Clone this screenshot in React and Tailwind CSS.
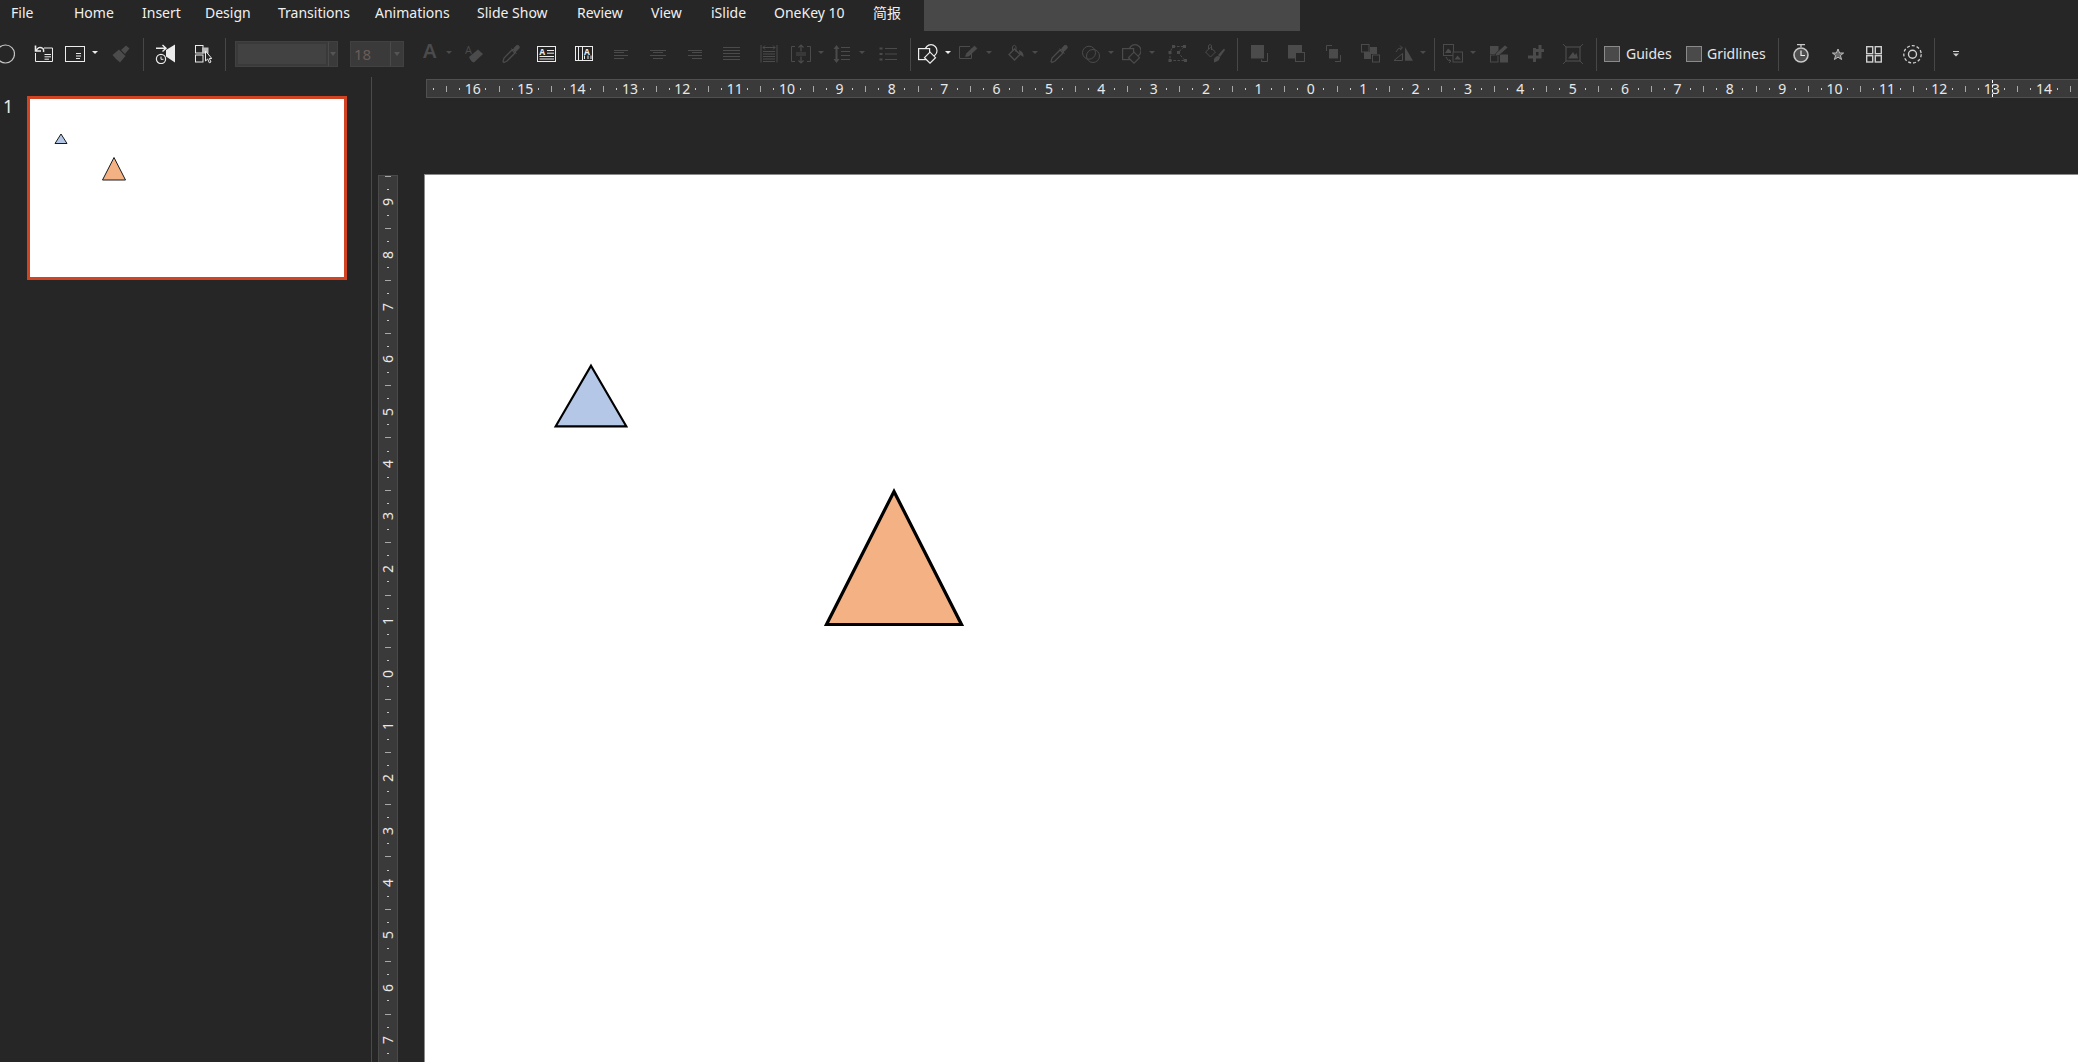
import React from "react";

const G = "#4b4b4b";
const W = "#ececec";
const BG = "#262626";

function Ic({ w, className = "", children }) {
  return (
    <svg width={w} height={20} viewBox={`0 0 ${w} 20`} fill="none" className={`shrink-0 ${className}`}>
      {children}
    </svg>
  );
}
const Caret = ({ className = "", color = G }) => (
  <Ic w={6} className={className}>
    <path d="M0 7H6L3 10Z" fill={color} />
  </Ic>
);
const Sep = ({ className = "" }) => <div className={`w-px h-[33px] shrink-0 bg-[#474747] ${className}`} />;
const Lines = ({ w, rows, className = "" }) => (
  <Ic w={w} className={className}>
    {rows.map((r, i) => (
      <path key={i} d={`M${r[0]} ${r[2] + 0.5}H${r[1]}`} stroke={G} />
    ))}
  </Ic>
);
const Dropper = ({ w, className = "" }) => (
  <Ic w={w} className={className}>
    <path d="M2 18.5L1 17.5L2 14L10 6L13 9L5 17Z" stroke={G} strokeWidth="1.3" />
    <path d="M9.5 4.5L11 6L13.5 2.5Q15.5 0.5 17 2Q18 4 16 5.5L13 8L14.5 9.5" fill={G} stroke={G} />
  </Ic>
);
const Shape = ({ w, color, className = "" }) => (
  <Ic w={w} className={className}>
    <circle cx="13" cy="6.7" r="6" stroke={color} strokeWidth="1.2" />
    <rect x="0.6" y="4.6" width="11" height="11" fill={BG} stroke={color} strokeWidth="1.2" />
    <path d="M12 8.2L17.5 13.7L12 19.2L6.5 13.7Z" fill={BG} stroke={color} strokeWidth="1.2" />
  </Ic>
);

const menus = [
  ["File", "ml-[11px] w-[22px]"],
  ["Home", "ml-[41px] w-[41px]"],
  ["Insert", "ml-[27px] w-[36px]"],
  ["Design", "ml-[27px] w-[46px]"],
  ["Transitions", "ml-[27px] w-[70px]"],
  ["Animations", "ml-[27px] w-[75px]"],
  ["Slide Show", "ml-[27px] w-[73px]"],
  ["Review", "ml-[27px] w-[47px]"],
  ["View", "ml-[27px] w-[32px]"],
  ["iSlide", "ml-[28px] w-[36px]"],
  ["OneKey 10", "ml-[27px] w-[71px]"],
  ["简报", "ml-[28px] w-[29px]"],
];

function Toolbar() {
  return (
    <div className="h-[46px] flex items-center shrink-0">
      <Ic w={18} className="-ml-[3px]">
        <circle cx="8.5" cy="10" r="9" stroke="#c4c4c4" strokeWidth="1.2" />
      </Ic>
      <Ic w={20} className="ml-[18px]">
        <path d="M11 4H19.5V17.5H2.5V9" stroke={W} />
        <path d="M2.5 1.5V7H8" stroke={W} strokeWidth="1.6" />
        <path d="M3 7Q5.5 1.5 10 4.5Q11 6 10.5 8" stroke={W} strokeWidth="1.5" />
        <path d="M11.5 10.5H18M11.5 12.8H18M11.5 15.2H16" stroke={W} />
      </Ic>
      <Ic w={20} className="ml-[12px]">
        <rect x="0.5" y="2.5" width="19" height="15" stroke={W} />
        <path d="M11 9.5H16M11 12H16M11 14.5H15" stroke={W} />
      </Ic>
      <Caret className="ml-[7px]" color={W} />
      <Ic w={18} className="ml-[14px]">
        <path d="M0.5 11L7 5.5L13.5 12L8 18.5Q4 15.5 0.5 11Z" fill={G} />
        <path d="M9 6L14 1.5L17.5 4.5L13 10Z" fill={G} />
      </Ic>
      <Sep className="ml-[13px]" />
      <Ic w={21} className="ml-[11px]">
        <path d="M11 6L20 0.5V18.5L11 12.5Z" fill={W} />
        <path d="M1 4.3H11M7.5 1L11 4.3L7.5 7.6" stroke={W} strokeWidth="1.4" />
        <circle cx="6" cy="15" r="4.6" fill={BG} stroke={W} strokeWidth="1.2" />
        <path d="M6 12.5V15.3H8.5" stroke={W} />
      </Ic>
      <Ic w={17} className="ml-[19px]">
        <rect x="0.5" y="1.5" width="7.5" height="7.5" stroke={W} />
        <rect x="7" y="3.5" width="6.5" height="6" fill="#bdbdbd" />
        <rect x="0.5" y="11" width="7.5" height="7" stroke={W} />
        <path d="M10.5 7V17L12.7 15L14.3 18.8L16 18L14.3 14.5H16.8Z" fill={BG} stroke={W} />
      </Ic>
      <Sep className="ml-[13px]" />
      <div className="ml-[9px] w-[103px] h-[26px] shrink-0 flex bg-[#3a3a3a] border border-[#414141]">
        <div className="w-[88px] m-[2px] bg-[#424242]" />
        <div className="flex-1 border-l border-[#4a4a4a] flex items-center justify-center">
          <div className="border-x-[3px] border-x-transparent border-t-[4px] border-t-[#555555]" />
        </div>
      </div>
      <div className="ml-[12px] w-[54px] h-[26px] shrink-0 flex bg-[#3a3a3a] border border-[#414141]">
        <div className="w-[39px] flex items-center text-[15px] leading-[20px] pl-[3px] text-[#6a5c58]">18</div>
        <div className="flex-1 border-l border-[#4a4a4a] flex items-center justify-center">
          <div className="border-x-[3px] border-x-transparent border-t-[4px] border-t-[#555555]" />
        </div>
      </div>
      <span className="ml-[19px] w-[13px] shrink-0 text-[20px] leading-[20px] -mt-[6px] font-semibold text-[#4b4b4b]">A</span>
      <Caret className="ml-[10px]" />
      <Ic w={18} className="ml-[13px]">
        <text x="0" y="10" fontSize="11" fill={G} fontFamily="Open Sans">A</text>
        <path d="M4 13L13 5.5L18 10L9 18.5Q6 18 4 13Z" fill={G} />
      </Ic>
      <Dropper w={18} className="ml-[19px]" />
      <Ic w={19} className="ml-[17px]">
        <rect x="0.5" y="2.5" width="18" height="15" stroke={W} />
        <text x="2.3" y="10.5" fontSize="8.5" fontWeight="700" fill={W} fontFamily="Open Sans">A</text>
        <path d="M10 6.5H17M10 9.2H17M2.5 12.5H17M2.5 15H17" stroke={W} />
      </Ic>
      <Ic w={18} className="ml-[19px]">
        <rect x="0.5" y="2.5" width="17" height="14" stroke={W} />
        <path d="M3.5 3V16M7.5 3V16M9.5 15V11.5M13 15V11.5M16 15V11.5" stroke={W} />
        <text x="9" y="10.5" fontSize="8.5" fontWeight="700" fill={W} fontFamily="Open Sans">A</text>
      </Ic>
      <Lines w={14} className="ml-[21px]" rows={[[0, 14, 6], [0, 10, 8], [0, 14, 11], [0, 10, 14]]} />
      <Lines w={16} className="ml-[22px]" rows={[[0, 16, 6], [3, 13, 8], [0, 16, 11], [3, 13, 14]]} />
      <Lines w={14} className="ml-[22px]" rows={[[0, 14, 6], [4, 14, 8], [0, 14, 11], [4, 14, 14]]} />
      <Lines w={17} className="ml-[21px]" rows={[[0, 17, 3], [0, 17, 6], [0, 17, 9], [0, 17, 12], [0, 17, 15]]} />
      <Ic w={18} className="ml-[20px]">
        <path d="M1 1V18.5M17 1V18.5" stroke={G} />
        <path d="M3 3.5H15M5 1.5L3 3.5L5 5.5M13 1.5L15 3.5L13 5.5" stroke={G} />
        <path d="M3 7.5H15M3 10H15M3 12.5H15M3 15H15M3 17.5H15" stroke={G} />
      </Ic>
      <Ic w={20} className="ml-[13px]">
        <path d="M4 2.5H0.5V17.5H4M16 2.5H19.5V17.5H16" stroke={G} />
        <path d="M10 1V7.5M7.5 3.5L10 1L12.5 3.5M10 12.5V19M7.5 16.5L10 19L12.5 16.5" stroke={G} strokeWidth="1.2" />
        <path d="M5 9H15M5 11H15" stroke={G} />
      </Ic>
      <Caret className="ml-[7px]" />
      <Ic w={17} className="ml-[9px]">
        <path d="M3.5 1L0.5 5H6.5ZM3.5 19L0.5 15H6.5Z" fill={G} />
        <path d="M3.5 4V16" stroke={G} strokeWidth="2" />
        <path d="M8 3.5H17M8 7.5H17M8 11.5H17M8 15.5H17" stroke={G} />
      </Ic>
      <Caret className="ml-[9px]" />
      <Ic w={18} className="ml-[14px]">
        <path d="M0.5 3.5H3.5V5.5H0.5ZM0.5 9H3.5V11H0.5ZM0.5 14.5H3.5V16.5H0.5Z" fill={G} />
        <path d="M6 4.5H18M6 10H18M6 15.5H18" stroke={G} />
      </Ic>
      <Sep className="ml-[13px]" />
      <Shape w={20} color={W} className="ml-[7px]" />
      <Caret className="ml-[7px]" color={W} />
      <Ic w={19} className="ml-[8px]">
        <path d="M12.5 4.5V14.5H0.5V2.5H11" stroke={G} />
        <path d="M6.5 12.5L7.5 9.5L15.5 2L18 4.5L10 12Z" stroke={G} fill={G} strokeWidth="0.6" />
      </Ic>
      <Caret className="ml-[8px]" />
      <Ic w={16} className="ml-[16px]">
        <path d="M6.5 5L1 10.5L6.5 16L12 10.5Z" stroke={G} strokeWidth="1.3" />
        <path d="M4.5 6.5V2.5Q6.5 0 8 2.5V8" stroke={G} />
        <path d="M11 6Q16 8 15.5 13Q13 11 11.5 10.5Z" fill={G} />
      </Ic>
      <Caret className="ml-[8px]" />
      <Dropper w={18} className="ml-[12px]" />
      <Ic w={18} className="ml-[14px]">
        <circle cx="7" cy="8.7" r="6.5" stroke={G} />
        <circle cx="11" cy="12" r="6.5" stroke={G} />
      </Ic>
      <Caret className="ml-[8px]" />
      <Shape w={19} color={G} className="ml-[8px]" />
      <Caret className="ml-[8px]" />
      <Ic w={20} className="ml-[13px]">
        <path d="M5 2.5H16.5L10 8.5L17 16.5H2V8L5 2.5" stroke={G} strokeDasharray="2.5 1.5" />
        <path d="M4 1H7V4H4ZM15 1H18V4H15ZM9 7H12V10H9ZM0.5 7H3.5V10H0.5ZM0.5 15H3.5V18H0.5ZM16 15H19V18H16Z" fill={G} />
      </Ic>
      <Ic w={20} className="ml-[17px]">
        <path d="M5.5 3.5L0.5 8L5.5 13L10.5 8Z" stroke={G} />
        <path d="M3.5 5V1.5Q5 -0.5 6.5 1.5V6" stroke={G} />
        <path d="M13 11L19 4.5L20 6L15 13Z" fill={G} />
        <path d="M9 15Q12 10 15 13Q15 17 9 18.5Z" fill={G} />
      </Ic>
      <Sep className="ml-[12px]" />
      <Ic w={17} className="ml-[13px]">
        <rect x="0" y="1" width="13" height="13.5" fill={G} />
        <path d="M14.5 9V17.5H8.5V15.5" stroke={G} transform="translate(2 0)" />
      </Ic>
      <Ic w={17} className="ml-[20px]">
        <rect x="0" y="1" width="14" height="13.5" fill={G} />
        <rect x="7.5" y="8.5" width="9" height="9" fill={BG} stroke={G} />
      </Ic>
      <Ic w={15} className="ml-[21px]">
        <rect x="3" y="5" width="9" height="9.5" fill={G} />
        <path d="M0.5 7V1.5H6M14.5 11V17.5H9" stroke={G} />
      </Ic>
      <Ic w={19} className="ml-[20px]">
        <rect x="0.5" y="0.5" width="7.5" height="7.5" stroke={G} />
        <rect x="3" y="8" width="7" height="7" fill={G} />
        <rect x="9" y="3" width="7" height="7" fill={G} />
        <rect x="11.5" y="11" width="7" height="7" fill={BG} stroke={G} />
      </Ic>
      <Ic w={20} className="ml-[13px]">
        <path d="M12 3L20 16.7H12Z" fill={G} />
        <path d="M1 16.5L9.5 9.5V16.5Z" stroke={G} />
        <path d="M3 8Q5 3 9 4M7 1.5L9.5 4L7 6" stroke={G} />
      </Ic>
      <Caret className="ml-[7px]" />
      <Sep className="ml-[8px]" />
      <Ic w={20} className="ml-[8px]">
        <rect x="0.5" y="0.5" width="10" height="11" stroke={G} />
        <path d="M2 9L5 4.5L8 7V9Z" fill={G} />
        <rect x="10" y="8" width="9.5" height="10" fill={BG} stroke={G} />
        <path d="M11.5 15.5L14.5 11.5L18 15.5Z" fill={G} />
        <path d="M3 13Q4 17 8 17M6 15.5L8 17L6 18.8" stroke={G} />
      </Ic>
      <Caret className="ml-[7px]" />
      <Ic w={18} className="ml-[14px]">
        <rect x="0" y="2" width="8.5" height="8" fill={G} />
        <rect x="10" y="10.5" width="8" height="8" fill={G} />
        <rect x="0.5" y="11" width="7.5" height="7" stroke={G} />
        <path d="M5 12L6 9L15 1L18 3.5L9 11.5Z" fill={G} stroke={BG} strokeWidth="0.7" />
      </Ic>
      <Ic w={16} className="ml-[20px]">
        <path d="M6.5 4V18M12 1V14.5M5 6.5H16M0 13H13.5" stroke={G} strokeWidth="3" />
      </Ic>
      <Ic w={20} className="ml-[19px]">
        <rect x="3" y="3" width="14" height="14" stroke={G} strokeWidth="1.2" />
        <path d="M5 14.5L10 8L12 11L13.5 9L15 14.5Z" fill={G} />
        <path d="M0 0L3 3M20 0L17 3M0 20L3 17M20 20L17 17" stroke={G} />
      </Ic>
      <Sep className="ml-[13px]" />
      <div className="ml-[7px] w-4 h-4 shrink-0 bg-[#4a4a4a] border border-[#8a8a8a]" />
      <span className="ml-[6px] -mt-px w-[45px] shrink-0 whitespace-nowrap text-[14px] text-[#e6e6e6]">Guides</span>
      <div className="ml-[15px] w-4 h-4 shrink-0 bg-[#4a4a4a] border border-[#8a8a8a]" />
      <span className="ml-[5px] -mt-px w-[59px] shrink-0 whitespace-nowrap text-[14px] text-[#e6e6e6]">Gridlines</span>
      <Sep className="ml-[12px]" />
      <Ic w={16} className="ml-[14px]">
        <path d="M4 0.7H12M8 1V3" stroke="#c8c8c8" strokeWidth="1.3" />
        <circle cx="8" cy="11" r="7" fill="#4f4f4f" stroke="#c8c8c8" strokeWidth="1.6" />
        <path d="M8 6.5V11.5H12" stroke={W} strokeWidth="1.2" />
      </Ic>
      <Ic w={12} className="ml-[23px]">
        <path d="M6 5L7.6 9H11.6L8.4 11.6L9.6 15.5L6 13.2L2.4 15.5L3.6 11.6L0.4 9H4.4Z" fill="#6a6a6a" stroke="#c8c8c8" strokeWidth="0.9" />
      </Ic>
      <Ic w={16} className="ml-[22px]">
        <rect x="0.7" y="2.7" width="6" height="7" stroke="#cfcfcf" strokeWidth="1.4" />
        <rect x="9.3" y="2.7" width="6" height="7" stroke="#cfcfcf" strokeWidth="1.4" />
        <rect x="0.7" y="11.7" width="6" height="6.3" stroke="#cfcfcf" strokeWidth="1.4" />
        <rect x="9.3" y="11.7" width="6" height="6.3" stroke="#cfcfcf" strokeWidth="1.4" />
      </Ic>
      <Ic w={19} className="ml-[21px]">
        <circle cx="9.5" cy="10.3" r="8.7" stroke="#cfcfcf" strokeWidth="1.3" strokeDasharray="3 2" />
        <circle cx="9.5" cy="10.3" r="4" stroke="#cfcfcf" strokeWidth="1.4" />
      </Ic>
      <Sep className="ml-[12px]" />
      <Ic w={6} className="ml-[18px]">
        <path d="M0 7.5H6" stroke="#cfcfcf" />
        <path d="M0 9.5H6L3 12.5Z" fill="#cfcfcf" />
      </Ic>
    </div>
  );
}

const qs = (from, to) => {
  const out = [];
  for (let q = from; q <= to; q++) out.push(q);
  return out;
};

function HRuler() {
  return (
    <div className="ml-[54px] h-[19px] flex items-center overflow-hidden bg-[#3a3a3a] border border-r-0 border-[#505050] relative">
      {qs(-67, 59).map((q) => (
        <div key={q} className="w-[13.1px] h-full shrink-0 flex items-center justify-center">
          {q % 4 === 0 ? (
            <span className="text-[14px] leading-none text-[#e8e8e8] shrink-0">{Math.abs(q / 4)}</span>
          ) : q % 2 === 0 ? (
            <div className="w-px h-[6px] bg-[#a8a8a8]" />
          ) : (
            <div className="w-px h-[2px] bg-[#c8c8c8]" />
          )}
        </div>
      ))}
      <div className="absolute left-[1565px] top-0 bottom-0 border-l border-dashed border-white" />
    </div>
  );
}

function VRuler() {
  return (
    <div className="ml-[6px] mt-px w-[20px] shrink-0 overflow-hidden bg-[#3a3a3a] border border-b-0 border-[#4a4a4a]">
      <div className="-mt-[6.5px] flex flex-col">
        {qs(-38, 29).map((q) => (
          <div key={q} className="h-[13.1px] w-full shrink-0 flex items-center justify-center">
            {q % 4 === 0 ? (
              <span className="text-[14px] leading-none text-[#e8e8e8] shrink-0 -rotate-90">{Math.abs(q / 4)}</span>
            ) : q % 2 === 0 ? (
              <div className="h-px w-[6px] bg-[#a8a8a8]" />
            ) : (
              <div className="h-px w-[2px] bg-[#c8c8c8]" />
            )}
          </div>
        ))}
      </div>
    </div>
  );
}

export default function App() {
  return (
    <div
      className="w-[2078px] h-[1062px] overflow-hidden flex flex-col bg-[#262626] text-white"
      style={{ fontFamily: '"Noto Sans", "Noto Sans CJK SC", sans-serif' }}
    >
      <div className="h-[31px] flex shrink-0">
        {menus.map(([t, c]) => (
          <div key={t} className={`${c} shrink-0 whitespace-nowrap text-[14px] leading-[26px] text-[#f0f0f0]`}>
            {t}
          </div>
        ))}
        <div className="ml-[22px] w-[376px] bg-[#484848]" />
      </div>
      <Toolbar />
      <div className="flex-1 flex min-h-0">
        <div className="w-[372px] shrink-0 border-r border-[#4a4a4a] pt-[19px] flex items-start">
          <div className="w-[27px] pl-[3px] text-[18px] leading-[20px] text-[#e8e8e8]">1</div>
          <div className="w-[320px] h-[184px] border-[3px] border-[#d04423] bg-white relative">
            <svg width="314" height="178" className="absolute left-0 top-0">
              <path d="M31 35L37 44.5H25Z" fill="#b4c7e7" stroke="#1a1a1a" strokeWidth="1" />
              <path d="M84 58.5L95.5 81H72.5Z" fill="#f4b183" stroke="#1a1a1a" strokeWidth="1" />
            </svg>
          </div>
        </div>
        <div className="flex-1 min-w-0 flex flex-col pt-[2px]">
          <HRuler />
          <div className="flex-1 min-h-0 flex mt-[76px]">
            <VRuler />
            <div className="ml-[26px] flex-1 relative bg-white border-l border-t border-[#8a8a8a]">
              <svg width="800" height="500" className="absolute left-0 top-0">
                <path d="M166 190.7L201.3 251.3H130.7Z" fill="#b4c7e7" stroke="#000" strokeWidth="2.2" />
                <path d="M469 316.5L536.5 449.5H401.5Z" fill="#f4b183" stroke="#000" strokeWidth="3.2" />
              </svg>
            </div>
          </div>
        </div>
      </div>
    </div>
  );
}
